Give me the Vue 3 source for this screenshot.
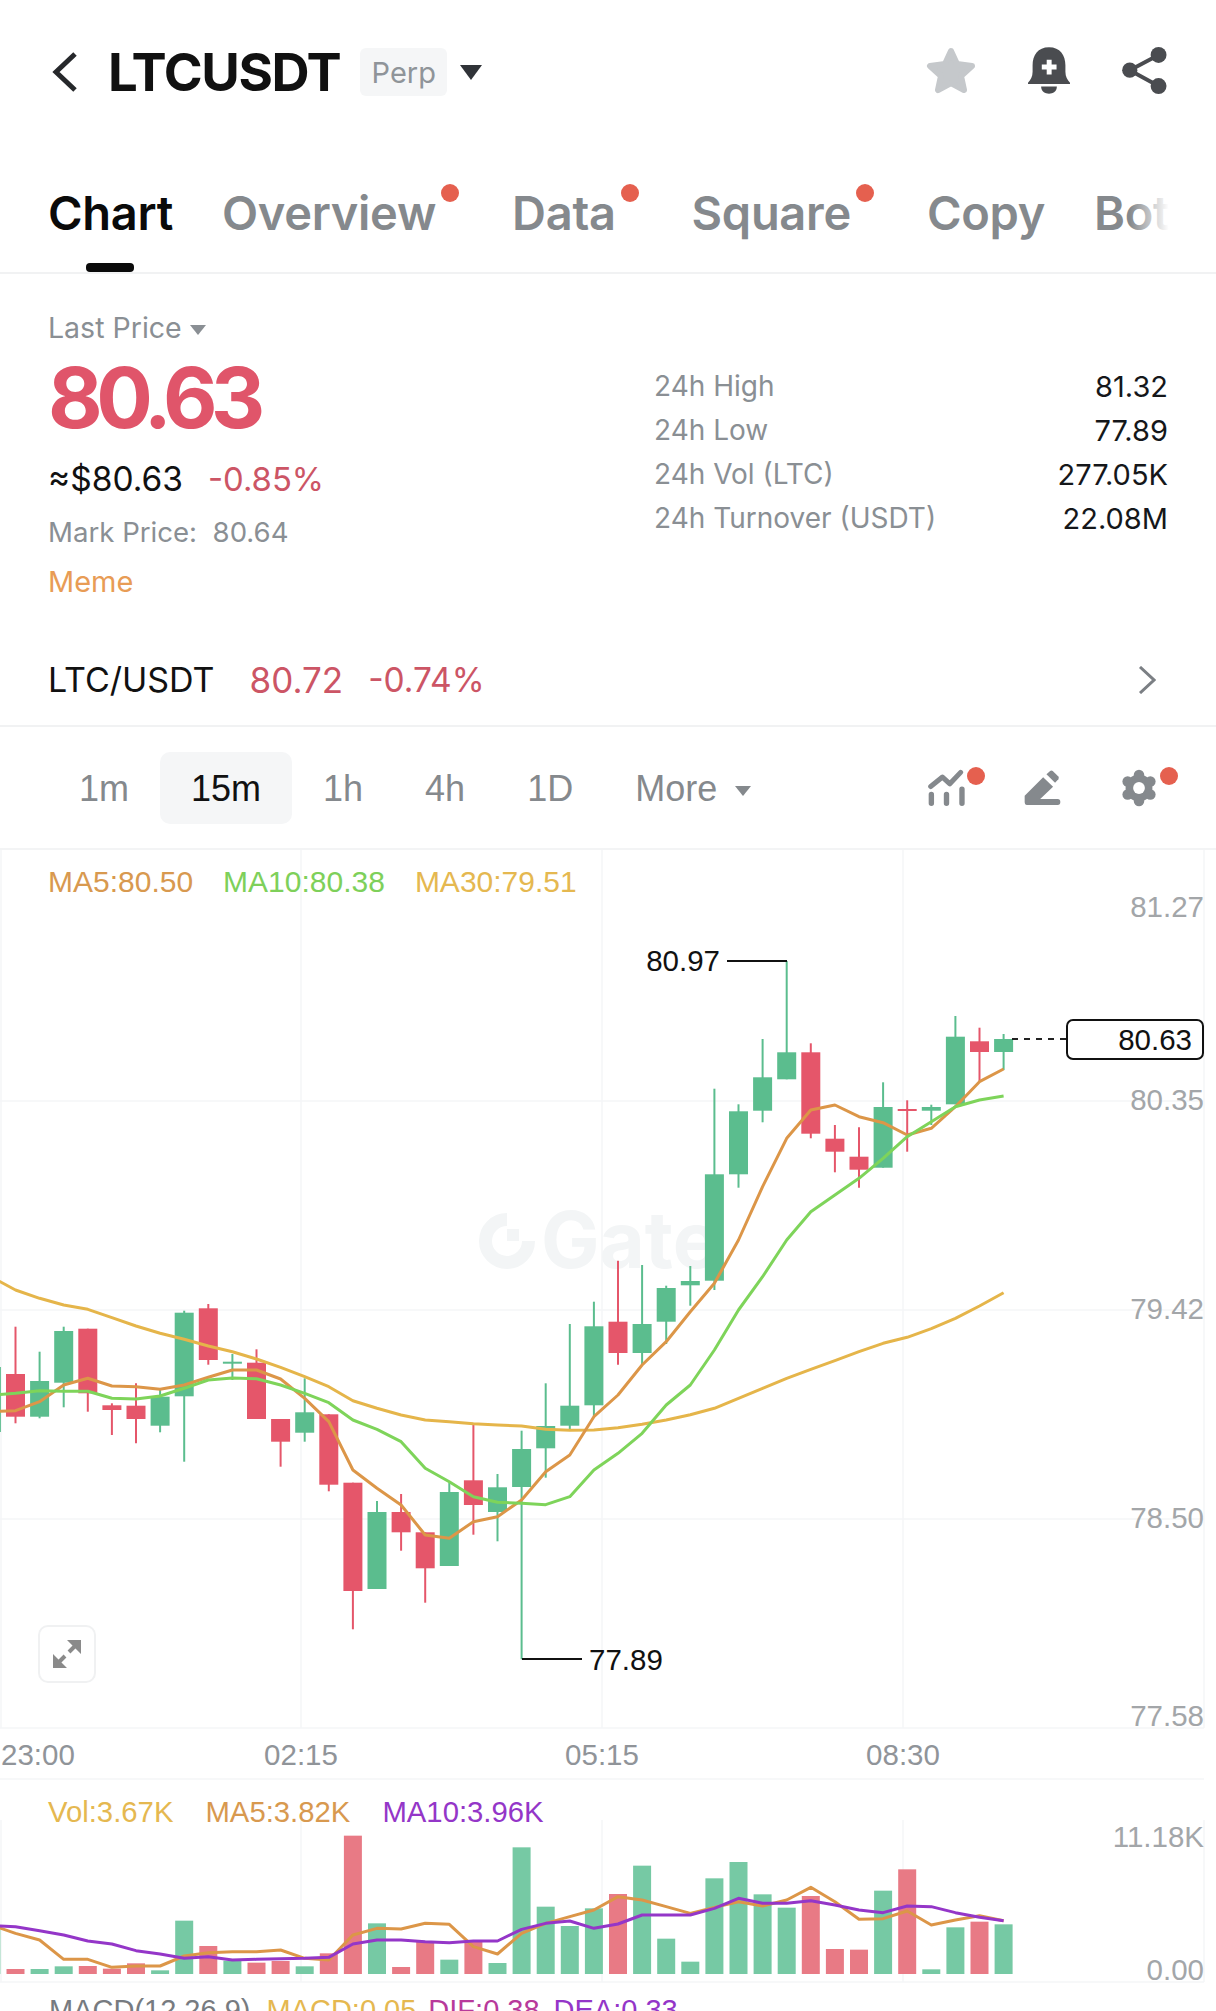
<template>
    <div class="page">
        <header class="topbar">
            <svg class="back" viewBox="0 0 26 40" width="26" height="40">
                <polyline points="23,2 4,20 23,38" fill="none" stroke="#26282b" stroke-width="5" />
            </svg>
            <h1 class="symbol">LTCUSDT</h1>
            <span class="badge">Perp</span>
            <span class="caret caret-dark"></span>
            <div class="top-icons">
                <svg viewBox="0 0 50 47" width="50" height="47">
                    <polygon
                        points="25,4 31,17 46,19 35,29 38,43 25,36 12,43 15,29 4,19 19,17"
                        fill="#c5c8cb"
                        stroke="#c5c8cb"
                        stroke-width="6"
                        stroke-linejoin="round"
                    />
                </svg>
                <svg viewBox="0 0 128 142" width="42" height="47">
                    <path
                        d="M64 0C30 0 14 25 14 55V75C14 90 8 100 0 108V112H128V108C120 100 114 90 114 75V55C114 25 98 0 64 0Z"
                        fill="#4a4c50"
                    />
                    <path d="M40 120H88C88 135 76 142 64 142C52 142 40 135 40 120Z" fill="#4a4c50" />
                    <path d="M57 38H72V53H87V68H72V83H57V68H42V53H57Z" fill="#fff" />
                </svg>
                <svg viewBox="0 0 135 142" width="45" height="47">
                    <path d="M110 24L23 70L110 118" fill="none" stroke="#4a4c50" stroke-width="12" />
                    <circle cx="110" cy="24" r="24" fill="#4a4c50" />
                    <circle cx="23" cy="70" r="23" fill="#4a4c50" />
                    <circle cx="110" cy="118" r="24" fill="#4a4c50" />
                </svg>
            </div>
        </header>

        <nav class="tabs">
            <span
                v-for="tab in tabs"
                :key="tab.label"
                class="tab"
                :class="{ active: tab.active, dotted: tab.dot }"
            >
                {{ tab.label }}
                <i v-if="tab.dot" class="dot tab-dot"></i>
            </span>
            <span class="tabs-fade"></span>
        </nav>

        <section class="info">
            <div class="info-left">
                <div class="last-label">Last Price <span class="caret caret-small"></span></div>
                <div class="last-price">80.63</div>
                <div class="sub-price">
                    <span>≈$80.63</span>
                    <span class="down sub-change">-0.85%</span>
                </div>
                <div class="mark">Mark Price:&nbsp; 80.64</div>
                <div class="meme">Meme</div>
            </div>
            <dl class="stats">
                <div v-for="row in stats" :key="row.label" class="stat-row">
                    <dt>{{ row.label }}</dt>
                    <dd>{{ row.value }}</dd>
                </div>
            </dl>
        </section>

        <div class="pair">
            <span class="pair-name">LTC/USDT</span>
            <span class="down pair-price">80.72</span>
            <span class="down pair-change">-0.74%</span>
            <svg class="pair-arrow" viewBox="0 0 18 28" width="18" height="28">
                <polyline points="2,1 16,14 2,27" fill="none" stroke="#7b7f84" stroke-width="3" />
            </svg>
        </div>

        <div class="periods">
            <span v-for="p in periods" :key="p" class="period" :class="{ current: p === '15m' }">{{ p }}</span>
            <span class="period more">More <span class="caret caret-gray"></span></span>
            <div class="tools">
                <span class="tool">
                    <svg viewBox="85 60 110 110" width="37" height="37">
                        <polyline
                            points="93,112 128,84 150,104 182,70"
                            fill="none"
                            stroke="#85898d"
                            stroke-width="15"
                            stroke-linecap="round"
                            stroke-linejoin="round"
                        />
                        <path d="M95 136V162M140 136V162M186 120V162" stroke="#85898d" stroke-width="16" stroke-linecap="round" />
                    </svg>
                    <i class="dot tool-dot"></i>
                </span>
                <span class="tool">
                    <svg viewBox="370 60 112 110" width="37" height="37">
                        <path
                            d="M378 168Q372 168 372 160V140L428 84L458 113L419 150H472Q480 150 480 159Q480 168 472 168Z"
                            fill="#85898d"
                        />
                        <path d="M438 75L449 65Q453 62 457 65L474 82Q477 86 474 90L464 101Z" fill="#85898d" />
                    </svg>
                </span>
                <span class="tool">
                    <svg viewBox="655 55 116 116" width="38" height="38">
                        <g fill="#85898d">
                            <circle cx="713" cy="113" r="41" />
                            <circle v-for="a in gearAngles" :key="a" :cx="713 + 40 * Math.cos(a)" :cy="113 + 40 * Math.sin(a)" r="16" />
                        </g>
                        <circle cx="713" cy="113" r="18" fill="#fff" />
                    </svg>
                    <i class="dot tool-dot"></i>
                </span>
            </div>
        </div>

        <section class="chart">
            <svg class="canvas" viewBox="0 850 1216 1161" width="1216" height="1161">
                <g stroke="#f5f6f7" stroke-width="1.5">
                    <line v-for="x in gridX" :key="x" :x1="x" :x2="x" y1="850" y2="1728" />
                    <line v-for="y in gridY" :key="y" x1="0" x2="1204" :y1="y" :y2="y" />
                    <line v-for="x in gridX" :key="'v' + x" :x1="x" :x2="x" y1="1820" y2="1982" />
                </g>

                <g fill="#f3f5f6">
                    <path d="M507 1219.5A21.5 21.5 0 1 0 528.5 1241" fill="none" stroke="#f3f5f6" stroke-width="13" />
                    <rect x="507" y="1229" width="12" height="12" />
                    <text x="541" y="1268" class="watermark">Gate</text>
                </g>

                <g v-for="c in candleItems" :key="c.i">
                    <line :x1="c.x" :x2="c.x" :y1="c.wt" :y2="c.wb" :stroke="c.color" stroke-width="2" />
                    <rect :x="c.x - 9.5" :y="c.bt" width="19" :height="Math.max(c.bb - c.bt, 2)" :fill="c.color" />
                </g>

                <polyline :points="ma30Points" class="line" stroke="#e5b54a" stroke-width="3" />
                <polyline :points="ma5Points" class="line" stroke="#dc9648" stroke-width="3" />
                <polyline :points="ma10Points" class="line" stroke="#7ed45a" stroke-width="3" />

                <polyline points="727,961 787,961" fill="none" stroke="#111" stroke-width="2" />
                <text x="720" y="971" text-anchor="end" class="mark-text">80.97</text>
                <polyline points="522,1659 582,1659" fill="none" stroke="#111" stroke-width="2" />
                <text x="589" y="1670" class="mark-text">77.89</text>

                <line x1="1012" x2="1067" y1="1039" y2="1039" stroke="#222" stroke-width="2" stroke-dasharray="6 6" />
                <rect x="1067" y="1020" width="136" height="39" rx="6" fill="#fff" stroke="#111" stroke-width="2" />
                <text x="1192" y="1050" text-anchor="end" class="mark-text">80.63</text>

                <text v-for="a in priceAxis" :key="a.label" x="1204" :y="a.y" text-anchor="end" class="axis-text">{{ a.label }}</text>
                <text v-for="t in timeAxis" :key="t.label" :x="t.x" y="1765" :text-anchor="t.anchor" class="time-text">{{ t.label }}</text>

                <rect
                    v-for="b in volumeBars"
                    :key="b.i"
                    :x="b.x - 9"
                    :y="b.y"
                    width="18"
                    :height="1974 - b.y"
                    :fill="b.color"
                />
                <polyline :points="volMa5Points" class="line" stroke="#dc9648" stroke-width="3" />
                <polyline :points="volMa10Points" class="line" stroke="#9436c8" stroke-width="3" />
            </svg>

            <div class="legend legend-main">
                <span class="ma5">MA5:80.50</span>
                <span class="ma10">MA10:80.38</span>
                <span class="ma30">MA30:79.51</span>
            </div>
            <div class="legend legend-vol">
                <span class="ma30">Vol:3.67K</span>
                <span class="ma5">MA5:3.82K</span>
                <span class="purple">MA10:3.96K</span>
            </div>
            <div class="legend legend-macd">
                <span class="gray">MACD(12,26,9)</span>
                <span class="ma30">MACD:0.05</span>
                <span class="magenta">DIF:0.38</span>
                <span class="purple">DEA:0.33</span>
            </div>

            <button class="expand">
                <svg viewBox="0 0 28 28" width="28" height="28">
                    <path d="M14 0H28V14ZM0 14V28H14Z" fill="#8a8a8a" />
                    <path d="M22 6L16 12M6 22L12 16" stroke="#8a8a8a" stroke-width="4" />
                </svg>
            </button>
        </section>
    </div>
</template>

<script setup>
const tabs = [
    { label: 'Chart', active: true },
    { label: 'Overview', dot: true },
    { label: 'Data', dot: true },
    { label: 'Square', dot: true },
    { label: 'Copy' },
    { label: 'Bot' },
];

const stats = [
    { label: '24h High', value: '81.32' },
    { label: '24h Low', value: '77.89' },
    { label: '24h Vol (LTC)', value: '277.05K' },
    { label: '24h Turnover (USDT)', value: '22.08M' },
];

const periods = ['1m', '15m', '1h', '4h', '1D'];
const gearAngles = [0, 1, 2, 3, 4, 5].map((n) => (n * Math.PI) / 3 + Math.PI / 2);

const gridX = [1, 301, 602, 903, 1204];
const gridY = [1101, 1310, 1519, 1728, 1779, 1982];

const priceAxis = [
    { label: '81.27', y: 917 },
    { label: '80.35', y: 1110 },
    { label: '79.42', y: 1319 },
    { label: '78.50', y: 1528 },
    { label: '77.58', y: 1726 },
    { label: '11.18K', y: 1847 },
    { label: '0.00', y: 1980 },
];

const timeAxis = [
    { label: '23:00', x: 1, anchor: 'start' },
    { label: '02:15', x: 301, anchor: 'middle' },
    { label: '05:15', x: 602, anchor: 'middle' },
    { label: '08:30', x: 903, anchor: 'middle' },
];

const RED = '#e5566a';
const GREEN = '#5bbd8e';
const xOf = (i) => 15.5 + 24.1 * i;

// color, wick top, body top, body bottom, wick bottom
const candles = [
    ['g', 1367, 1367, 1432, 1432],
    ['r', 1326.7, 1374, 1416.7, 1423.3],
    ['g', 1351.7, 1381, 1416.7, 1418.3],
    ['g', 1326.7, 1331, 1382.7, 1407.3],
    ['r', 1328.7, 1328.7, 1393.3, 1411.7],
    ['r', 1403.3, 1405.3, 1410, 1435],
    ['r', 1383.3, 1405.7, 1419, 1443.3],
    ['g', 1388.3, 1396.7, 1425.7, 1432.3],
    ['g', 1310.7, 1312.7, 1396.3, 1461.7],
    ['r', 1304, 1308.3, 1360, 1364.7],
    ['g', 1354, 1361.7, 1363.7, 1380],
    ['r', 1349.3, 1362.7, 1419, 1419],
    ['r', 1419, 1419, 1441.7, 1466.7],
    ['g', 1378.3, 1412.3, 1432.7, 1441.7],
    ['r', 1414.3, 1414.3, 1484.7, 1491.3],
    ['r', 1482.7, 1482.7, 1591, 1629.3],
    ['g', 1501, 1512, 1589, 1589],
    ['r', 1494, 1512, 1532.3, 1550.7],
    ['r', 1532.3, 1532.3, 1568.3, 1602.7],
    ['g', 1482.3, 1492, 1566, 1566],
    ['r', 1424, 1480.3, 1505, 1534.7],
    ['g', 1474, 1487.3, 1512, 1541.3],
    ['g', 1430.7, 1449, 1487, 1659.3],
    ['g', 1383.3, 1426, 1448.3, 1477.7],
    ['g', 1324, 1405.7, 1425.7, 1430],
    ['g', 1301.7, 1326.3, 1405.3, 1416.7],
    ['r', 1260.7, 1321.7, 1353, 1364.7],
    ['g', 1265, 1324, 1353, 1365],
    ['g', 1285.7, 1288, 1321.7, 1344],
    ['g', 1266, 1281, 1285.3, 1305.7],
    ['g', 1088.7, 1174.3, 1280.7, 1290],
    ['g', 1104.3, 1111.3, 1174.3, 1187.7],
    ['g', 1039, 1077.3, 1110.7, 1122.3],
    ['g', 961, 1052.3, 1079.3, 1079.3],
    ['r', 1043.3, 1052.3, 1133.7, 1138.3],
    ['r', 1125, 1138.7, 1151.7, 1172.3],
    ['r', 1127.3, 1156.7, 1169.7, 1187.7],
    ['g', 1082.3, 1107, 1167.7, 1167.7],
    ['r', 1100.3, 1109, 1111, 1151.7],
    ['g', 1104.7, 1107, 1110.7, 1125],
    ['g', 1016, 1036.7, 1104.3, 1104.3],
    ['r', 1027.7, 1041.3, 1052, 1082],
    ['g', 1034, 1039, 1052, 1070],
];

const candleItems = candles.map(([c, wt, bt, bb, wb], n) => ({
    i: n - 1,
    x: xOf(n - 1),
    color: c === 'r' ? RED : GREEN,
    wt,
    bt,
    bb,
    wb,
}));

const toPoints = (values) => values.map((y, n) => `${xOf(n - 1)},${y}`).join(' ');

const ma5Points = toPoints([
    1411.7, 1410.7, 1401.7, 1385, 1378.3, 1386, 1386.7, 1389.3, 1385, 1377.3, 1370, 1370, 1379, 1398.3,
    1421.7, 1470, 1488.3, 1505, 1535, 1538.3, 1521.7, 1516.7, 1500, 1471.7, 1455, 1416.7, 1395, 1365,
    1341.7, 1311.7, 1283.3, 1240, 1186.7, 1138.3, 1110, 1105, 1116.7, 1122.7, 1135, 1128.3, 1106.7,
    1081.7, 1069,
]);

const ma10Points = toPoints([
    1395, 1393.3, 1390.7, 1391.3, 1391.3, 1398.3, 1399, 1396, 1388.3, 1380, 1378, 1378.7, 1385, 1393.3,
    1402.7, 1420, 1429.3, 1441.7, 1468.3, 1481.7, 1496.7, 1502.3, 1503.3, 1504.7, 1496.7, 1470, 1453.3,
    1433.3, 1405, 1385, 1350, 1310, 1276.7, 1240, 1211.7, 1195, 1178.3, 1158.3, 1136.7, 1121.7, 1106.7,
    1100, 1096,
]);

const ma30Points = toPoints([
    1277, 1290, 1298.3, 1305, 1309.3, 1317.7, 1326, 1333.3, 1339.3, 1346, 1351.7, 1359, 1367.3, 1376.7,
    1386.7, 1400.7, 1408.3, 1415, 1420, 1421.7, 1423.7, 1425, 1426, 1429.3, 1430.3, 1430, 1427.7, 1424.3,
    1420, 1414.7, 1408.3, 1398.3, 1388.3, 1378.3, 1369.3, 1360.7, 1351.7, 1343.3, 1337.3, 1328.7, 1318.3,
    1306, 1292.7,
]);

const volY = (z) => 1770 + z / 3;

const volTops = [
    470, 597, 597, 589, 588, 596, 580, 601, 452, 528, 572, 578, 573, 589, 550, 197, 460, 591, 516, 569, 516,
    579, 232, 410, 468, 415, 372, 287, 506, 575, 325, 276, 373, 413, 378, 537, 539, 362, 298, 598, 472, 455,
    463,
];

const volumeBars = volTops.map((z, n) => ({
    i: n - 1,
    x: xOf(n - 1),
    y: volY(z),
    color: candles[n][0] === 'r' ? '#e87a85' : '#76c9a4',
}));

const volMa5Points = toPoints(
    [
        465, 490, 510, 568, 568, 592, 588, 588, 558, 548, 545, 545, 540, 565, 570, 495, 475, 477, 460, 463, 530,
        552, 490, 460, 440, 420, 380, 390, 410, 430, 412, 395, 408, 390, 352, 395, 448, 446, 423, 465, 450, 437,
        452,
    ].map(volY),
);

const volMa10Points = toPoints(
    [
        467, 470, 482, 495, 513, 522, 542, 552, 565, 560, 570, 568, 566, 565, 562, 522, 510, 510, 515, 518, 513,
        513, 478, 460, 453, 475, 462, 435, 435, 435, 415, 385, 400, 400, 392, 405, 420, 428, 408, 410, 428, 442,
        452,
    ].map(volY),
);
</script>

<style>
html,
body {
    margin: 0;
    background: #fff;
}
</style>

<style scoped>
.page {
    width: 1216px;
    height: 2011px;
    overflow: hidden;
    background: #fff;
    font-family: Inter, "Liberation Sans", sans-serif;
    color: #111;
}

.topbar {
    height: 144px;
    display: flex;
    align-items: center;
    padding: 0 49px 0 52px;
    box-sizing: border-box;
}

.back {
    margin-right: 30px;
}

.symbol {
    margin: 0 20px 0 0;
    font-size: 52.7px;
    font-weight: 700;
    letter-spacing: -1.4px;
    line-height: 1;
}

.badge {
    width: 87px;
    height: 48px;
    display: flex;
    align-items: center;
    justify-content: center;
    background: #f5f6f7;
    border-radius: 6px;
    color: #8f9499;
    font-size: 29px;
    margin-right: 13px;
}

.caret {
    display: inline-block;
    width: 0;
    height: 0;
    border-left: 11px solid transparent;
    border-right: 11px solid transparent;
    border-top: 15px solid #303338;
}

.caret-small {
    border-left-width: 8px;
    border-right-width: 8px;
    border-top: 10px solid #8a8f94;
    vertical-align: 3px;
}

.caret-gray {
    border-left-width: 8px;
    border-right-width: 8px;
    border-top: 10px solid #85898d;
    vertical-align: 5px;
    margin-left: 8px;
}

.top-icons {
    margin-left: auto;
    margin-top: -4px;
    display: flex;
    align-items: center;
    gap: 52px;
}

.tabs {
    position: relative;
    height: 130px;
    display: flex;
    gap: 49px;
    padding: 41px 0 0 48px;
    box-sizing: border-box;
    border-bottom: 2px solid #f1f2f3;
    overflow: hidden;
}

.tab {
    position: relative;
    flex: none;
    height: 56px;
    line-height: 56px;
    font-size: 47px;
    font-weight: 600;
    color: #85898d;
    letter-spacing: -0.3px;
}

.tab.dotted {
    margin-right: 27px;
}

.tab.active {
    color: #0a0a0a;
}

.tab.active::after {
    content: "";
    position: absolute;
    left: 38px;
    top: 78px;
    width: 48px;
    height: 9px;
    border-radius: 4px;
    background: #0a0a0a;
}

.dot {
    position: absolute;
    width: 18px;
    height: 18px;
    border-radius: 50%;
    background: #e5604f;
}

.tab-dot {
    right: -23px;
    top: -1px;
}

.tabs-fade {
    position: absolute;
    left: 1130px;
    top: 0;
    bottom: 0;
    width: 86px;
    background: linear-gradient(to right, rgba(255, 255, 255, 0), #fff 45%);
}

.info {
    height: 358px;
    display: flex;
    padding: 36px 48px 0;
    box-sizing: border-box;
}

.info-left {
    width: 606px;
}

.last-label {
    font-size: 28.5px;
    line-height: 36px;
    color: #8a8f94;
}

.last-price {
    margin-top: 10px;
    font-size: 84px;
    line-height: 84px;
    font-weight: 700;
    letter-spacing: -6.5px;
    color: #e0556a;
}

.sub-price {
    margin-top: 19px;
    display: flex;
    gap: 25px;
    font-size: 33.5px;
    line-height: 40px;
}

.sub-change {
    font-size: 32.8px;
}

.down {
    color: #cc5565;
}

.mark {
    margin-top: 15px;
    font-size: 27.6px;
    line-height: 36px;
    color: #8a8f94;
}

.meme {
    margin-top: 14px;
    font-size: 29px;
    line-height: 36px;
    color: #e89c55;
}

.stats {
    flex: 1;
    margin: 54px 0 0;
}

.stat-row {
    height: 44px;
    display: flex;
    justify-content: space-between;
    align-items: center;
    font-size: 28px;
}

.stat-row dt {
    color: #8a8f94;
}

.stat-row dd {
    margin: 0;
    font-size: 29px;
    color: #15171a;
}

.pair {
    height: 95px;
    display: flex;
    align-items: center;
    padding: 2px 60px 0 48px;
    box-sizing: border-box;
    border-bottom: 2px solid #f1f2f3;
    font-size: 34px;
}

.pair-price {
    margin-left: 35px;
    font-size: 35px;
}

.pair-change {
    margin-left: 25px;
    font-size: 33.5px;
}

.pair-arrow {
    margin-left: auto;
}

.periods {
    height: 123px;
    display: flex;
    align-items: center;
    padding: 0 58px 0 48px;
    box-sizing: border-box;
    border-bottom: 2px solid #f3f4f5;
}

.period {
    height: 72px;
    line-height: 74px;
    padding: 0 31px;
    font-size: 36px;
    font-family: "Liberation Sans", sans-serif;
    color: #85898d;
    border-radius: 10px;
}

.period.current {
    background: #f5f6f7;
    color: #111;
}

.tools {
    margin-left: auto;
    display: flex;
    align-items: center;
    gap: 59px;
}

.tool {
    position: relative;
    display: flex;
}

.tool-dot {
    right: -20px;
    top: -2px;
}

.chart {
    position: relative;
    height: 1161px;
}

.canvas {
    display: block;
}

.line {
    fill: none;
    stroke-linejoin: round;
}

.watermark {
    font-size: 78px;
    font-weight: 700;
    font-family: Inter, "Liberation Sans", sans-serif;
}

.mark-text {
    font-size: 29.5px;
    fill: #111;
    font-family: "Liberation Sans", sans-serif;
}

.axis-text {
    font-size: 29.5px;
    fill: #a3a6a9;
    font-family: "Liberation Sans", sans-serif;
}

.time-text {
    font-size: 29.5px;
    fill: #909499;
    font-family: "Liberation Sans", sans-serif;
}

.legend {
    position: absolute;
    left: 48px;
    display: flex;
    font-size: 30px;
    line-height: 36px;
    font-family: "Liberation Sans", sans-serif;
    white-space: nowrap;
}

.legend-main {
    top: 14px;
    gap: 30px;
}

.legend-vol {
    top: 944px;
    gap: 32px;
    font-size: 29.3px;
}

.legend-macd {
    top: 1142px;
    left: 49px;
    gap: 16px;
    font-size: 29px;
}

.legend-macd .ma30 {
    margin-right: -4px;
}

.legend-macd .magenta {
    margin-right: -2px;
}

.ma5 {
    color: #d8994f;
}

.ma10 {
    color: #7ed05a;
}

.ma30 {
    color: #e5b850;
}

.purple {
    color: #9436c8;
}

.magenta {
    color: #b83a9b;
}

.gray {
    color: #777b80;
}

.expand {
    position: absolute;
    left: 38px;
    top: 775px;
    width: 58px;
    height: 58px;
    padding: 0;
    display: flex;
    align-items: center;
    justify-content: center;
    background: #fff;
    border: 2px solid #f0f1f2;
    border-radius: 10px;
}
</style>
